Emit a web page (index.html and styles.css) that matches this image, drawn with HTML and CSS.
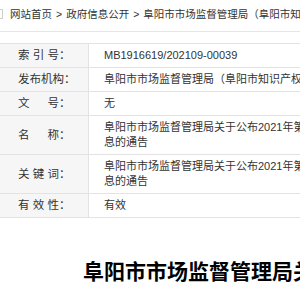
FILE: index.html
```html
<html>
	<head>
		<meta charset="utf-8">
		<title>阜阳市市场监督管理局</title>
		<link rel="stylesheet" href="styles.css">
	</head>
	<body>
		<div class="page">
			<div class="crumbs">
				<svg class="home" width="10" height="10" viewBox="0 0 10 10"><rect x="0.5" y="0.5" width="9" height="9" fill="none" stroke="#cfcfcf"/></svg>
				<a href="#">网站首页</a>
				<span class="sep">&gt;</span>
				<a href="#">政府信息公开</a>
				<span class="sep">&gt;</span>
				<a href="#">阜阳市市场监督管理局（阜阳市知识产权局）</a>
			</div>
			<table class="info">
				<tr>
					<th>索 引 号：</th>
					<td>MB1916619/202109-00039</td>
				</tr>
				<tr>
					<th>发布机构：</th>
					<td>阜阳市市场监督管理局（阜阳市知识产权局）</td>
				</tr>
				<tr>
					<th>文 　 号：</th>
					<td>无</td>
				</tr>
				<tr>
					<th>名 　 称：</th>
					<td>阜阳市市场监督管理局关于公布2021年第34批食品安全监督抽检信息的通告</td>
				</tr>
				<tr>
					<th>关 键 词：</th>
					<td>阜阳市市场监督管理局关于公布2021年第34批食品安全监督抽检信息的通告</td>
				</tr>
				<tr>
					<th>有 效 性：</th>
					<td>有效</td>
				</tr>
			</table>
			<h1 class="title">阜阳市市场监督管理局关于公布2021年第34批食品安全监督抽检信息的通告</h1>
		</div>
	</body>
</html>
```

FILE: styles.css
```css
html{
	font-family: "Liberation Sans", "Noto Sans CJK SC", sans-serif;
}
body{
	margin: 0;
	background: #ffffff;
	color: #333333;
	overflow: hidden;
}
.page{
	width: 700px;
}
.crumbs{
	display: flex;
	align-items: center;
	white-space: nowrap;
	font-size: 10.5px;
	line-height: 20px;
	padding: 4px 0 7px 0;
	border-bottom: 1px solid #e6e6e6;
}
.crumbs a{
	color: #333333;
	text-decoration: none;
}
.home{
	margin-left: -7px;
	margin-right: 7px;
}
.sep{
	margin: 0 4px;
}
.info{
	margin: 11px 0 0 -1px;
	border-collapse: collapse;
	table-layout: fixed;
	width: 440px;
	font-size: 11px;
	line-height: 15px;
}
.info th, .info td{
	border: 1px solid #e3e3e3;
	padding: 4px 0;
	text-align: left;
	font-weight: normal;
	vertical-align: middle;
}
.info th{
	width: 70px;
	padding-left: 18px;
	background: #f6f6f6;
	font-size: 11.5px;
	white-space: nowrap;
}
.info td{
	padding-left: 15px;
	padding-right: 8px;
}
.title{
	margin: 39px 0 0 83px;
	font-size: 21px;
	line-height: 30px;
	color: #000000;
	white-space: nowrap;
}
```
